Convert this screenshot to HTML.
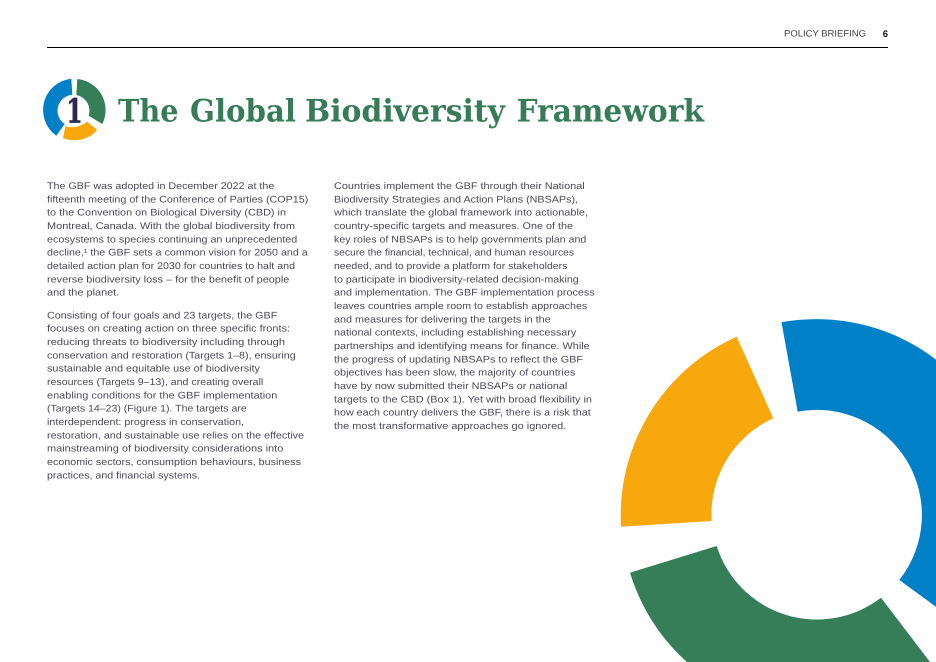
<!DOCTYPE html>
<html lang="en">
<head>
<meta charset="utf-8">
<title>Policy Briefing</title>
<style>
html,body{margin:0;padding:0;background:#fff;width:936px;height:662px;overflow:hidden}
svg{display:block}
text{text-rendering:geometricPrecision}
.b{font-family:"Liberation Sans",sans-serif;font-size:9.6px;fill:#4a4958}
.t{font-family:"DejaVu Serif",serif;font-weight:700;font-size:31px;fill:#357c57}
</style>
</head>
<body>
<svg width="936" height="662" viewBox="0 0 936 662" xmlns="http://www.w3.org/2000/svg">
<rect width="936" height="662" fill="#fff"/>
<text x="784" y="36.6" font-family="Liberation Sans, sans-serif" font-size="9.2" fill="#3d3c49" textLength="82" lengthAdjust="spacingAndGlyphs">POLICY BRIEFING</text>
<text x="882.7" y="37" font-family="Liberation Sans, sans-serif" font-size="9.6" font-weight="700" fill="#111" textLength="5.2" lengthAdjust="spacingAndGlyphs">6</text>
<rect x="47" y="47" width="841" height="1" fill="#000"/>

<path d="M71.3 78.7L72.3 94.7A16 16 0 0 0 64.7 124L56.3 135.7A31.5 31.5 0 0 1 71.3 78.7Z" fill="#0080c6"/>
<path d="M77.3 79A31.2 31.2 0 0 1 102.3 124L88.7 115.7A16 16 0 0 0 76.3 95Z" fill="#367e57"/>
<path d="M97.3 130A31 31 0 0 1 63 138.3L65.3 126.3Q76.3 129.4 87.3 121.7Z" fill="#f8a70d"/>
<text x="66.5" y="122.3" font-family="DejaVu Serif, serif" font-weight="700" font-size="33" fill="#2c2a4c" stroke="#2c2a4c" stroke-width="0.7" textLength="16" lengthAdjust="spacingAndGlyphs">1</text>

<text class="t" x="118" y="121.7" textLength="60.5" lengthAdjust="spacingAndGlyphs">The</text>
<text class="t" x="190" y="121.7" textLength="106" lengthAdjust="spacingAndGlyphs">Global</text>
<text class="t" x="305" y="121.7" textLength="200" lengthAdjust="spacingAndGlyphs">Biodiversity</text>
<text class="t" x="516.5" y="121.7" textLength="187.5" lengthAdjust="spacingAndGlyphs">Framework</text>

<g class="b">
<text x="47" y="189" textLength="227.3" lengthAdjust="spacingAndGlyphs">The GBF was adopted in December 2022 at the</text>
<text x="47" y="202.3" textLength="261.3" lengthAdjust="spacingAndGlyphs">fifteenth meeting of the Conference of Parties (COP15)</text>
<text x="47" y="215.7" textLength="239" lengthAdjust="spacingAndGlyphs">to the Convention on Biological Diversity (CBD) in</text>
<text x="47" y="229" textLength="248" lengthAdjust="spacingAndGlyphs">Montreal, Canada. With the global biodiversity from</text>
<text x="47" y="242.3" textLength="250.3" lengthAdjust="spacingAndGlyphs">ecosystems to species continuing an unprecedented</text>
<text x="47" y="255.7" textLength="260.7" lengthAdjust="spacingAndGlyphs">decline,¹ the GBF sets a common vision for 2050 and a</text>
<text x="47" y="269" textLength="248" lengthAdjust="spacingAndGlyphs">detailed action plan for 2030 for countries to halt and</text>
<text x="47" y="282.3" textLength="242.3" lengthAdjust="spacingAndGlyphs">reverse biodiversity loss – for the benefit of people</text>
<text x="47" y="295.7" textLength="72.3" lengthAdjust="spacingAndGlyphs">and the planet.</text>

<text x="47" y="318.3" textLength="230.3" lengthAdjust="spacingAndGlyphs">Consisting of four goals and 23 targets, the GBF</text>
<text x="47" y="331.7" textLength="243" lengthAdjust="spacingAndGlyphs">focuses on creating action on three specific fronts:</text>
<text x="47" y="345" textLength="238" lengthAdjust="spacingAndGlyphs">reducing threats to biodiversity including through</text>
<text x="47" y="358.3" textLength="248.7" lengthAdjust="spacingAndGlyphs">conservation and restoration (Targets 1–8), ensuring</text>
<text x="47" y="371.7" textLength="213" lengthAdjust="spacingAndGlyphs">sustainable and equitable use of biodiversity</text>
<text x="47" y="385" textLength="216.3" lengthAdjust="spacingAndGlyphs">resources (Targets 9–13), and creating overall</text>
<text x="47" y="398.3" textLength="230.3" lengthAdjust="spacingAndGlyphs">enabling conditions for the GBF implementation</text>
<text x="47" y="411.7" textLength="199.7" lengthAdjust="spacingAndGlyphs">(Targets 14–23) (Figure 1). The targets are</text>
<text x="47" y="425" textLength="197" lengthAdjust="spacingAndGlyphs">interdependent: progress in conservation,</text>
<text x="47" y="438.3" textLength="257" lengthAdjust="spacingAndGlyphs">restoration, and sustainable use relies on the effective</text>
<text x="47" y="451.7" textLength="236.3" lengthAdjust="spacingAndGlyphs">mainstreaming of biodiversity considerations into</text>
<text x="47" y="465" textLength="254" lengthAdjust="spacingAndGlyphs">economic sectors, consumption behaviours, business</text>
<text x="47" y="478.3" textLength="153" lengthAdjust="spacingAndGlyphs">practices, and financial systems.</text>

<text x="334" y="189" textLength="250.7" lengthAdjust="spacingAndGlyphs">Countries implement the GBF through their National</text>
<text x="334" y="202.3" textLength="244" lengthAdjust="spacingAndGlyphs">Biodiversity Strategies and Action Plans (NBSAPs),</text>
<text x="334" y="215.7" textLength="254" lengthAdjust="spacingAndGlyphs">which translate the global framework into actionable,</text>
<text x="334" y="229" textLength="239" lengthAdjust="spacingAndGlyphs">country-specific targets and measures. One of the</text>
<text x="334" y="242.3" textLength="252.3" lengthAdjust="spacingAndGlyphs">key roles of NBSAPs is to help governments plan and</text>
<text x="334" y="255.7" textLength="240" lengthAdjust="spacingAndGlyphs">secure the financial, technical, and human resources</text>
<text x="334" y="269" textLength="233.3" lengthAdjust="spacingAndGlyphs">needed, and to provide a platform for stakeholders</text>
<text x="334" y="282.3" textLength="244.7" lengthAdjust="spacingAndGlyphs">to participate in biodiversity-related decision-making</text>
<text x="334" y="295.7" textLength="260.7" lengthAdjust="spacingAndGlyphs">and implementation. The GBF implementation process</text>
<text x="334" y="309" textLength="253.3" lengthAdjust="spacingAndGlyphs">leaves countries ample room to establish approaches</text>
<text x="334" y="322.3" textLength="216.7" lengthAdjust="spacingAndGlyphs">and measures for delivering the targets in the</text>
<text x="334" y="335.7" textLength="242.3" lengthAdjust="spacingAndGlyphs">national contexts, including establishing necessary</text>
<text x="334" y="349" textLength="255.7" lengthAdjust="spacingAndGlyphs">partnerships and identifying means for finance. While</text>
<text x="334" y="362.3" textLength="249" lengthAdjust="spacingAndGlyphs">the progress of updating NBSAPs to reflect the GBF</text>
<text x="334" y="375.7" textLength="241.3" lengthAdjust="spacingAndGlyphs">objectives has been slow, the majority of countries</text>
<text x="334" y="389" textLength="233.3" lengthAdjust="spacingAndGlyphs">have by now submitted their NBSAPs or national</text>
<text x="334" y="402.3" textLength="258" lengthAdjust="spacingAndGlyphs">targets to the CBD (Box 1). Yet with broad flexibility in</text>
<text x="334" y="415.7" textLength="256.7" lengthAdjust="spacingAndGlyphs">how each country delivers the GBF, there is a risk that</text>
<text x="334" y="429" textLength="232.3" lengthAdjust="spacingAndGlyphs">the most transformative approaches go ignored.</text>
</g>

<path d="M781.5 322.3A196 196 0 0 1 936 359.6L936 606.7L899.3 580A105 105 0 0 0 797.7 411.7Z" fill="#0080c6"/>
<path d="M736.7 336.7L773.3 418.3A105 105 0 0 0 711.7 521L621 526.7A196 196 0 0 1 736.7 336.7Z" fill="#f8a70d"/>
<path d="M716.7 546L630 572.7A196 196 0 0 0 686.9 662L930 662L881 597.7A105 105 0 0 1 716.7 546Z" fill="#367e57"/>
</svg>
</body>
</html>
